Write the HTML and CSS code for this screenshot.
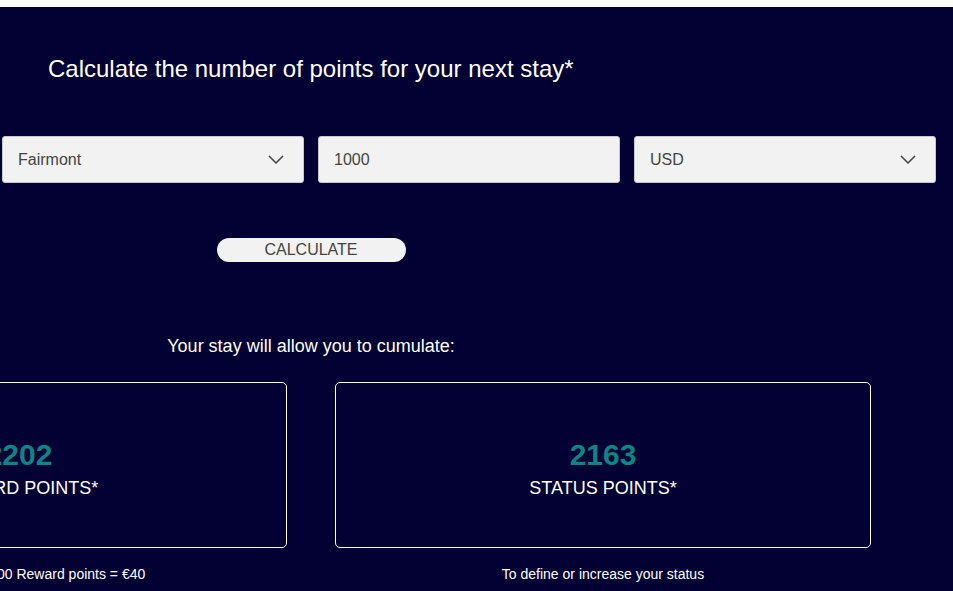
FILE: index.html
```html
<!DOCTYPE html>
<html lang="en">
<head>
<meta charset="utf-8">
<title>Points calculator</title>
<link rel="stylesheet" href="styles.css">
</head>
<body>
<div class="topbar"></div>
<main class="calc">
  <h1 class="title">Calculate the number of points for your next stay*</h1>
  <div class="fields">
    <div class="field select"><span>Fairmont</span>
      <svg class="chev" width="16" height="9" viewBox="0 0 16 9"><path d="M1 1l7 7 7-7" fill="none" stroke="#444" stroke-width="1.5"/></svg>
    </div>
    <div class="field"><span>1000</span></div>
    <div class="field select"><span>USD</span>
      <svg class="chev" width="16" height="9" viewBox="0 0 16 9"><path d="M1 1l7 7 7-7" fill="none" stroke="#444" stroke-width="1.5"/></svg>
    </div>
  </div>
  <div class="action">
    <button class="btn">CALCULATE</button>
  </div>
  <p class="lead">Your stay will allow you to cumulate:</p>
  <div class="results">
    <div class="result">
      <div class="card">
        <div class="num">2202</div>
        <div class="label">REWARD POINTS*</div>
      </div>
      <p class="caption">Equivalent to: 2000 Reward points = €40</p>
    </div>
    <div class="result">
      <div class="card">
        <div class="num">2163</div>
        <div class="label">STATUS POINTS*</div>
      </div>
      <p class="caption">To define or increase your status</p>
    </div>
  </div>
</main>
</body>
</html>
```

FILE: styles.css
```css
html, body {
  margin: 0;
  padding: 0;
  background: #ffffff;
  font-family: "Liberation Sans", Arial, sans-serif;
}
.topbar {
  height: 7px;
  background: #ffffff;
}
.calc {
  background: #030033;
  height: 584px;
  overflow: hidden;
  color: #ffffff;
}
.title {
  margin: 0;
  padding: 48px 0 0 48px;
  font-size: 24px;
  font-weight: normal;
  line-height: 28px;
}
.fields {
  display: grid;
  grid-template-columns: 302px 302px 302px;
  gap: 14px;
  margin: 53px 0 0 2px;
}
.field {
  height: 47px;
  box-sizing: border-box;
  background: #f2f2f2;
  border: 1px solid #c9c9cc;
  border-radius: 3px;
  display: flex;
  align-items: center;
  justify-content: space-between;
  padding: 0 19px 0 15px;
  color: #444444;
  font-size: 16px;
}
.chev {
  display: block;
}
.action {
  width: 618px;
  margin: 55px 0 0 2px;
  display: flex;
  justify-content: center;
}
.btn {
  width: 189px;
  height: 24px;
  border: 0;
  border-radius: 12px;
  background: #f2f2f2;
  color: #444444;
  font-family: "Liberation Sans", Arial, sans-serif;
  font-size: 16px;
  padding: 0;
  line-height: 24px;
}
.lead {
  width: 618px;
  margin: 73px 0 0 2px;
  text-align: center;
  font-size: 18px;
  line-height: 22px;
}
.results {
  display: flex;
  gap: 48px;
  margin: 25px 0 0 -249px;
}
.result {
  width: 536px;
  flex: none;
}
.card {
  height: 166px;
  box-sizing: border-box;
  border: 1px solid #ffffff;
  border-radius: 5px;
  display: flex;
  flex-direction: column;
  align-items: center;
  justify-content: center;
  padding-top: 6px;
}
.num {
  color: #0b8585;
  font-size: 30px;
  font-weight: bold;
  line-height: 34px;
}
.label {
  font-size: 18px;
  line-height: 22px;
  margin-top: 5px;
}
.caption {
  margin: 18px 0 0;
  text-align: center;
  font-size: 14px;
  line-height: 16px;
}
```
